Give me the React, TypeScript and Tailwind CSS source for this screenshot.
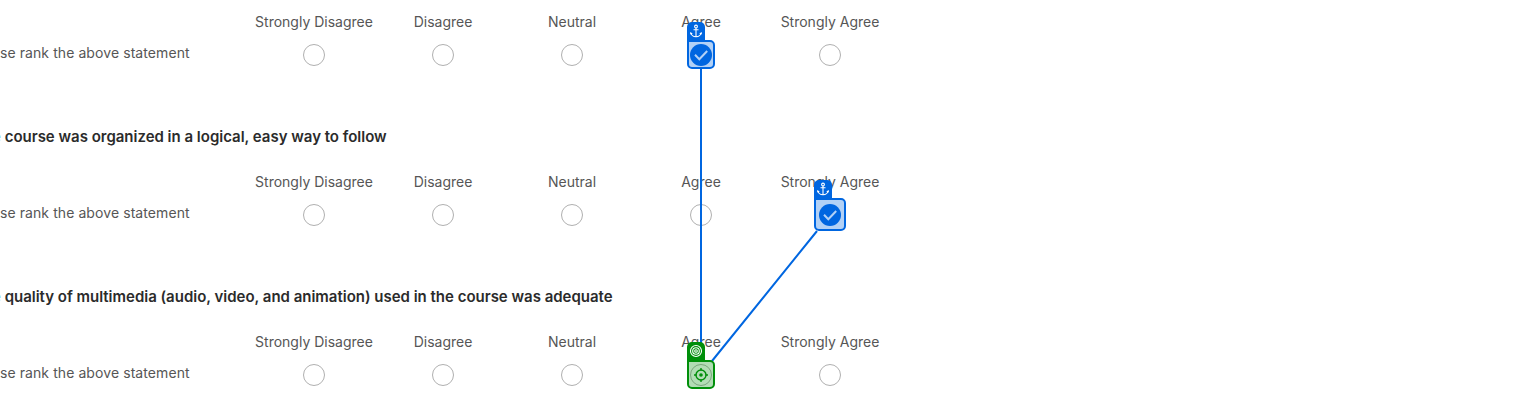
const labels = ['Strongly Disagree', 'Disagree', 'Neutral', 'Agree', 'Strongly Agree'];

function Check() {
  return (
    <svg className="block size-[22px]" viewBox="0 0 22 22" fill="none">
      <circle cx="11" cy="11" r="11" fill="#0066e0" />
      <path d="M5 10.800 9.300 15.200l7.900-8.200" stroke="#fff" strokeWidth="2" />
    </svg>
  );
}

function Rating({ checked }: { checked?: number }) {
  return (
    <div className="grid h-20 grid-cols-[249px_repeat(5,129px)] grid-rows-[32px_48px] text-[14px] leading-5 text-[#565656]">
      <div />
      {labels.map((l) => (
        <div key={l} className="pt-1 pl-px text-center whitespace-nowrap">{l}</div>
      ))}
      <div className="pt-[3px] tracking-[0.08px] whitespace-nowrap">se rank the above statement</div>
      {labels.map((l, i) => (
        <div key={l} className="flex items-start justify-center pt-[4px]">
          {i === checked ? <Check /> : <div className="size-[22px] rounded-full border border-[#b0b0b0] bg-white" />}
        </div>
      ))}
    </div>
  );
}

function Title({ children }: { children: string }) {
  return (
    <h2 className="h-20 pt-[38px] text-[15px] leading-[22px] font-semibold tracking-[-0.01px] whitespace-nowrap text-[#2b2b2b]">
      <span className="-ml-[8px] text-[#70b8f4]">e</span> {children}
    </h2>
  );
}

function Anchor() {
  return (
    <svg className="size-[14px]" viewBox="0 0 14 14" fill="none" stroke="#fff" strokeWidth="1.1">
      <circle cx="7" cy="2.500" r="1.400" />
      <path d="M7 4v8.800M4.500 5.800h5M2 9c.4 2.300 2.200 3.700 5 3.800 2.800-.1 4.600-1.500 5-3.800" />
      <path d="M1.200 10.600V8l2.600 1.500zM12.800 10.600V8l-2.600 1.500z" fill="#fff" stroke="none" />
    </svg>
  );
}

function Target() {
  return (
    <svg className="size-[14px]" viewBox="0 0 14 14" fill="none" stroke="#fff" strokeWidth="1.1">
      <circle cx="7" cy="7" r="5.500" />
      <circle cx="7" cy="7" r="3.300" />
      <circle cx="7" cy="7" r="1.300" />
    </svg>
  );
}

function Crosshair() {
  return (
    <svg className="size-4" viewBox="0 0 16 16" fill="none" stroke="#008f0a" strokeWidth="1.4">
      <circle cx="8" cy="8" r="5" />
      <path d="M8 1v2.500M8 12.500V15M1 8h2.500M12.500 8H15" />
      <circle cx="8" cy="8" r="1.800" fill="#008f0a" stroke="none" />
    </svg>
  );
}

export default function App() {
  return (
    <main className="relative h-[409px] w-full overflow-hidden bg-white pt-2 font-['Inter',sans-serif]">
      <Rating checked={3} />
      <Title>course was organized in a logical, easy way to follow</Title>
      <Rating checked={4} />
      <Title>quality of multimedia (audio, video, and animation) used in the course was adequate</Title>
      <Rating />

      <svg className="absolute top-0 left-0 h-[409px] w-[900px]" viewBox="0 0 900 409" stroke="#0066e0" strokeWidth="2">
        <path d="M701 68V343M817 231 712 361" />
      </svg>

      <div className="absolute top-[22px] left-[687px] flex h-[19px] w-[18px] items-start justify-center rounded-t-[5px] bg-[#0066e0] pt-[2px]"><Anchor /></div>
      <div className="absolute top-[40px] left-[687px] h-[29px] w-[28px] rounded-[5px] rounded-tl-none border-2 border-[#0066e0] bg-[#0066e0]/30" />

      <div className="absolute top-[180px] left-[814px] flex h-[19px] w-[18px] items-start justify-center rounded-t-[5px] bg-[#0066e0] pt-[2px]"><Anchor /></div>
      <div className="absolute top-[198px] left-[814px] h-[33px] w-[32px] rounded-[5px] rounded-tl-none border-2 border-[#0066e0] bg-[#0066e0]/30" />

      <div className="absolute top-[342px] left-[687px] flex h-[19px] w-[18px] items-start justify-center rounded-t-[5px] bg-[#008f0a] pt-[2px]"><Target /></div>
      <div className="absolute top-[360px] left-[687px] flex h-[29px] w-[28px] items-center justify-center rounded-[5px] rounded-tl-none border-2 border-[#008f0a] bg-[#008f0a]/30"><Crosshair /></div>
    </main>
  );
}
